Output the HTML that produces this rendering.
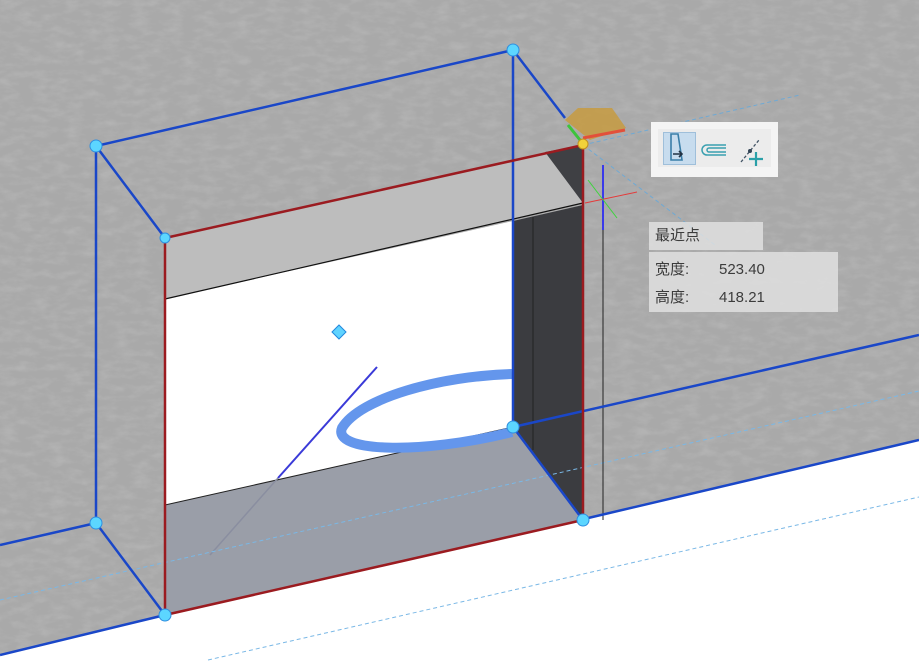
<!DOCTYPE html>
<html><head><meta charset="utf-8"><style>
html,body{margin:0;padding:0;width:919px;height:666px;overflow:hidden;background:#a6a6a6;font-family:"Liberation Sans","Noto Sans CJK SC",sans-serif}
.box{position:absolute;background:rgba(226,226,226,0.82);color:#3c3c3c;font-size:15px}
</style></head><body>
<svg width="919" height="666" style="position:absolute;left:0;top:0">
<defs>
<filter id="n" x="0" y="0" width="100%" height="100%">
<feTurbulence type="fractalNoise" baseFrequency="0.06 0.14" numOctaves="3" seed="4"/>
<feColorMatrix type="matrix" values="0 0 0 0 0.55  0 0 0 0 0.55  0 0 0 0 0.55  0 0 0 -2 1.2"/>
</filter>
</defs>
<rect width="919" height="666" fill="#a9a9a9"/>
<rect width="919" height="666" fill="#8e8e8e" opacity="0.4" filter="url(#n)"/>
<polygon points="0,666 0,655 165,615 584,519 919,440 919,666" fill="#fff"/>
<!-- opening -->
<polygon points="165,238 583,145 583,203 165,299" fill="#bdbdbd"/>
<polygon points="545,152 583,145 583,203" fill="#3f4044"/>
<polygon points="165,299 513,221 513,427 165,505" fill="#fff"/>
<polygon points="513,221 583,205 583,520 513,427" fill="#3b3c40"/>
<line x1="533" y1="217" x2="533" y2="450" stroke="#222" stroke-width="1"/>
<polygon points="165,505 513,427 583,520 165,615" fill="#9a9ea8"/>
<line x1="165" y1="299" x2="583" y2="203" stroke="#111" stroke-width="1.2"/>
<line x1="165" y1="505" x2="513" y2="427" stroke="#222" stroke-width="1"/>
<path d="M512,374 C440,376 360,398 342,428 C332,452 420,455 512,432" fill="none" stroke="#6496ec" stroke-width="10"/>
<line x1="278" y1="478" x2="377" y2="367" stroke="#3a3ad8" stroke-width="2"/>
<line x1="278" y1="478" x2="210" y2="555" stroke="#8a8ea0" stroke-width="1.5"/>
<polygon points="339,325 346,332 339,339 332,332" fill="#5fd3ff" stroke="#2288dd"/>
<!-- dashed guides -->
<line x1="0" y1="600" x2="919" y2="391" stroke="#7ab8e6" stroke-width="1" stroke-dasharray="4,3"/>
<line x1="208" y1="660" x2="919" y2="497" stroke="#7ab8e6" stroke-width="1" stroke-dasharray="4,3"/>
<line x1="583" y1="145" x2="800" y2="95" stroke="#6fa9d4" stroke-width="1" stroke-dasharray="4,3"/>
<line x1="583" y1="145" x2="715" y2="245" stroke="#6fa9d4" stroke-width="1" stroke-dasharray="4,3"/>
<line x1="603" y1="210" x2="603" y2="520" stroke="#222" stroke-width="1"/>
<!-- blue edges -->
<g stroke="#1a47c8" stroke-width="2.5" fill="none">
<polyline points="0,545 96,523"/>
<polyline points="513,427 919,335"/>
<polyline points="0,655 165,615"/>
<polyline points="584,519 919,440"/>
<polyline points="96,146 513,50 565,118"/>
<polyline points="96,146 165,238"/>
<polyline points="96,146 96,523 165,615"/>
<polyline points="513,50 513,427 583,520"/>
</g>
<polygon points="165,238 583,145 583,520 165,615" fill="none" stroke="#9b1b20" stroke-width="2.5"/>
<!-- gizmo -->
<line x1="603" y1="165" x2="603" y2="230" stroke="#1515ff" stroke-width="1.5"/>
<line x1="585" y1="203" x2="637" y2="192" stroke="#e43a3a" stroke-width="1"/>
<line x1="588" y1="180" x2="617" y2="218" stroke="#3cd43c" stroke-width="1"/>
<polygon points="565,120 578,108 612,108 626,128 590,140" fill="#c89a3a" opacity="0.8"/>
<line x1="583" y1="138" x2="625" y2="130" stroke="#e2503a" stroke-width="3"/>
<line x1="568" y1="125" x2="580" y2="140" stroke="#3cc43c" stroke-width="3"/>
<circle cx="583" cy="144" r="5" fill="#f2d23a" stroke="#c09020"/>
<g fill="#5cd6ff" stroke="#2f8fe0" stroke-width="1">
<circle cx="96" cy="146" r="6"/><circle cx="513" cy="50" r="6"/><circle cx="165" cy="238" r="5"/>
<circle cx="96" cy="523" r="6"/><circle cx="165" cy="615" r="6"/><circle cx="583" cy="520" r="6"/><circle cx="513" cy="427" r="6"/>
</g>
</svg>
<div style="position:absolute;left:651px;top:122px;width:127px;height:55px;background:#f4f4f4"></div>
<div style="position:absolute;left:658px;top:129px;width:113px;height:38px;background:#ececec"></div>
<div style="position:absolute;left:663px;top:132px;width:33px;height:33px;background:#c7dcee;border:1px solid #9fbfda;box-sizing:border-box"></div>
<svg width="127" height="55" style="position:absolute;left:651px;top:122px">
<path d="M20,12 H27 L31,38 H20 Z" fill="none" stroke="#3a7ea8" stroke-width="1.6"/>
<path d="M22,32 H31 M28,29 L31,32 L28,35" fill="none" stroke="#234" stroke-width="1.6"/>
<path d="M75,23 H56 A5,5 0 0 0 56,33 H75 M75,26 H58 A2,2 0 0 0 58,30 H75" fill="none" stroke="#3aa0b0" stroke-width="1.5"/>
<path d="M90,40 L108,18" stroke="#456" stroke-width="1.3" stroke-dasharray="3,2"/>
<circle cx="99" cy="29" r="2" fill="#345"/>
<path d="M105,30 V44 M98,37 H112" stroke="#2aa0a8" stroke-width="2.2"/>
</svg>
<div class="box" style="left:649px;top:222px;width:114px;height:28px;line-height:28px;padding-left:6px;box-sizing:border-box">最近点</div>
<div class="box" style="left:649px;top:252px;width:189px;height:60px;padding:4px 0 0 6px;box-sizing:border-box;line-height:28px">
<div>宽度:<span style="position:absolute;left:70px">523.40</span></div>
<div>高度:<span style="position:absolute;left:70px">418.21</span></div>
</div>
</body></html>
